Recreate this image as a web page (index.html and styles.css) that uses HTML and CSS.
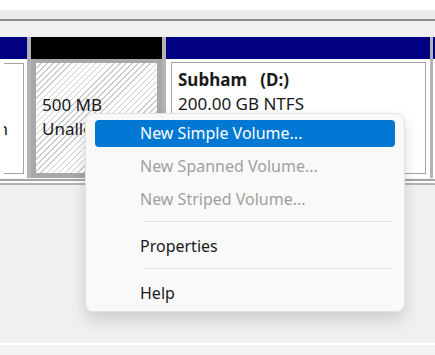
FILE: index.html
```html
<!DOCTYPE html>
<html lang="en">
  <head>
    <meta charset="UTF-8" />
    <meta name="viewport" content="width=device-width, initial-scale=1.0" />
    <title>Disk Management</title>
    <link rel="stylesheet" href="styles.css">
  </head>
  <body>
    <div class="window">
      <div class="toolbar"></div>

      <div class="disk">
        <div class="part part-sys">
          <div class="part-head navy"></div>
          <div class="part-body">
            <div class="part-box clip-left">
              <span class="line">&nbsp;</span>
              <span class="line">&nbsp;</span>
              <span class="line">Healthy (Boot, Page File, Crash</span>
            </div>
          </div>
        </div>

        <div class="part part-free">
          <div class="part-head black"></div>
          <div class="part-body">
            <div class="part-box hatched">
              <span class="line">&nbsp;</span>
              <span class="line">500 MB</span>
              <span class="line">Unallocated</span>
            </div>
          </div>
        </div>

        <div class="part part-data">
          <div class="part-head navy"></div>
          <div class="part-body">
            <div class="part-box">
              <span class="line bold">Subham&nbsp;&nbsp; (D:)</span>
              <span class="line">200.00 GB NTFS</span>
              <span class="line">Healthy (Primary Partition)</span>
            </div>
          </div>
        </div>

        <div class="part part-more">
          <div class="part-head navy"></div>
          <div class="part-body"></div>
        </div>
      </div>

      <div class="disk-foot"></div>
      <div class="workspace"></div>
      <div class="statusbar"></div>

      <!-- context menu over the unallocated space -->
      <ul class="menu">
        <li class="menu-item active">New Simple Volume...</li>
        <li class="menu-item disabled">New Spanned Volume...</li>
        <li class="menu-item disabled">New Striped Volume...</li>
        <li class="menu-sep"></li>
        <li class="menu-item">Properties</li>
        <li class="menu-sep"></li>
        <li class="menu-item">Help</li>
      </ul>
    </div>
  </body>
</html>
```

FILE: styles.css
```css
body {
  margin: 0;
  font-family: "Noto Sans", "Open Sans", sans-serif;
  color: #1a1a1a;
  background-color: #f0f0f0;
}
.window {
  position: relative;
  width: 435px;
  height: 355px;
  overflow: hidden;
  display: flex;
  flex-direction: column;
}
.toolbar {
  height: 37px;
  flex-shrink: 0;
  background: linear-gradient(
    #ffffff 0 10px,
    #ececec 10px 19px,
    #8e8e8e 19px 21px,
    #f0f0f0 21px 37px
  );
}
.disk {
  height: 141px;
  flex-shrink: 0;
  display: flex;
  gap: 4px;
  background-color: #b3b3b3;
}
.part {
  display: flex;
  flex-direction: column;
}
.part-sys {
  width: 27px;
}
.part-free {
  width: 131px;
}
.part-data {
  width: 264px;
  margin-right: -1px;
}
.part-more {
  flex: 1;
}
.part-head {
  height: 22px;
  flex-shrink: 0;
}
.navy {
  background-color: #000080;
}
.black {
  background-color: #000;
}
.part-body {
  flex: 1;
  display: flex;
  background-color: #fff;
  padding: 4px 3px 4px 4px;
}
.part-free .part-body {
  background-color: #a8a8a8;
  padding: 4px 5px 5px 5px;
}
.part-data .part-body {
  padding: 3px 4px 4px 5px;
}
.part-more .part-body {
  padding: 0;
}
.part-box {
  flex: 1;
  display: flex;
  flex-direction: column;
  border: 1px solid #a4a4a4;
  padding: 5px 6px;
  overflow: hidden;
  font-size: 17px;
  line-height: 24px;
  white-space: nowrap;
}
.line {
  display: block;
}
.bold {
  font-weight: 700;
}
.clip-left {
  border-left: none;
  align-items: flex-end;
  padding: 5px 15px 5px 0;
}
.hatched {
  border: none;
  padding: 6px 6px;
  background: repeating-linear-gradient(
    135deg,
    #ffffff 0 3.2px,
    #cdcdcd 3.2px 4.3px
  );
}
.disk-foot {
  height: 8px;
  flex-shrink: 0;
  background: linear-gradient(
    #f4f4f4 0 1px,
    #a6a6a6 1px 3px,
    #fbfbfb 3px 5px,
    #b4b4b4 5px 7px,
    #f0f0f0 7px 8px
  );
}
.workspace {
  flex: 1;
}
.statusbar {
  height: 10px;
  flex-shrink: 0;
  border-top: 2px solid #fff;
  background-color: #f3f3f3;
}
.menu {
  position: absolute;
  left: 85px;
  top: 113px;
  width: 320px;
  box-sizing: border-box;
  margin: 0;
  padding: 3px 0 1px;
  list-style: none;
  display: flex;
  flex-direction: column;
  background-color: #f9f9f9;
  border: 1px solid #e2e2e2;
  border-radius: 8px;
  box-shadow: 0 8px 16px rgba(0, 0, 0, 0.14);
  font-size: 16px;
}
.menu-item {
  height: 27px;
  line-height: 27px;
  margin: 3px 9px;
  padding-left: 45px;
  border-radius: 4px;
  color: #1a1a1a;
}
.menu-item.active {
  background-color: #0078d4;
  color: #fff;
}
.menu-item.disabled {
  color: #a0a0a0;
}
.menu-sep {
  height: 1px;
  margin: 5px 11px 8px 57px;
  background-color: #e0e0e0;
}
```
